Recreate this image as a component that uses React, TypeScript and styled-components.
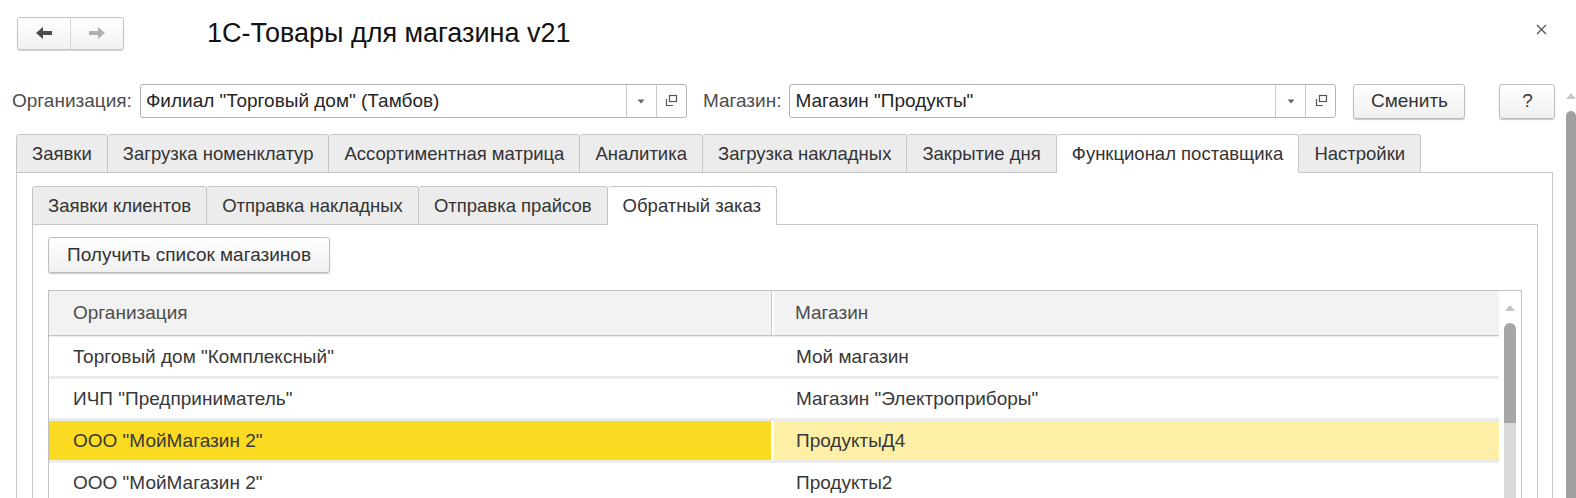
import styled, { createGlobalStyle } from "styled-components"

const Global = createGlobalStyle`
  html, body {
    margin: 0;
    padding: 0;
    background: #fff;
  }
  body {
    font-family: "Liberation Sans", Arial, sans-serif;
    color: #333;
    overflow: hidden;
  }
`

const mainTabs = [
  "Заявки",
  "Загрузка номенклатур",
  "Ассортиментная матрица",
  "Аналитика",
  "Загрузка накладных",
  "Закрытие дня",
  "Функционал поставщика",
  "Настройки",
]

const subTabs = ["Заявки клиентов", "Отправка накладных", "Отправка прайсов", "Обратный заказ"]

const rows = [
  { org: "Торговый дом \"Комплексный\"", shop: "Мой магазин" },
  { org: "ИЧП \"Предприниматель\"", shop: "Магазин \"Электроприборы\"" },
  { org: "ООО \"МойМагазин 2\"", shop: "ПродуктыД4", selected: true },
  { org: "ООО \"МойМагазин 2\"", shop: "Продукты2" },
]

function ArrowIcon({ dir, color }: { dir: "left" | "right", color: string }) {
  return (
    <svg width="18" height="14" viewBox="0 0 18 14" style={{ transform: dir === "right" ? "scaleX(-1)" : undefined }}>
      <path d="M1 7 L8 1 L8 5 L17 5 L17 9 L8 9 L8 13 Z" fill={color} />
    </svg>
  )
}

function CopyIcon() {
  return (
    <svg width="14" height="14" viewBox="0 0 14 14">
      <rect x="5.5" y="1.5" width="7" height="6" fill="none" stroke="#555" strokeWidth="1.2" />
      <path d="M2.5 5 V11.5 H9" fill="none" stroke="#555" strokeWidth="1.2" />
    </svg>
  )
}

function CaretIcon() {
  return (
    <svg width="8" height="5" viewBox="0 0 8 5">
      <path d="M0.5 0.5 H7.5 L4 4.5 Z" fill="#666" />
    </svg>
  )
}

function Field({ value }: { value: string }) {
  return (
    <Input>
      <InputText>{value}</InputText>
      <InputBtn><CaretIcon /></InputBtn>
      <InputBtn><CopyIcon /></InputBtn>
    </Input>
  )
}

export default function App() {
  return (
    <Page>
      <Global />
      <Main>
        <TitleBar>
          <NavGroup>
            <NavBtn><ArrowIcon dir="left" color="#4a4a4a" /></NavBtn>
            <NavBtn $last><ArrowIcon dir="right" color="#b0b0b0" /></NavBtn>
          </NavGroup>
          <Title>1С-Товары для магазина v21</Title>
          <Close>
            <svg width="11" height="11" viewBox="0 0 11 11">
              <path d="M1 1 L10 10 M10 1 L1 10" stroke="#555" strokeWidth="1.3" />
            </svg>
          </Close>
        </TitleBar>

        <FormRow>
          <Label>Организация:</Label>
          <Field value={"Филиал \"Торговый дом\" (Тамбов)"} />
          <Label $gap>Магазин:</Label>
          <Field value={"Магазин \"Продукты\""} />
          <Button $width={112} $ml={17}>Сменить</Button>
          <Button $width={56} $ml={34}>?</Button>
        </FormRow>

        <Tabs>
          {mainTabs.map((t) => (
            <Tab key={t} $active={t === "Функционал поставщика"}>{t}</Tab>
          ))}
        </Tabs>
        <OuterPanel>
          <SubTabs>
            {subTabs.map((t) => (
              <Tab key={t} $active={t === "Обратный заказ"}>{t}</Tab>
            ))}
          </SubTabs>
          <InnerPanel>
            <Button $width={282} $height={36}>Получить список магазинов</Button>
            <Table>
              <Grid>
                <HeadRow>
                  <HeadCell>Организация</HeadCell>
                  <HeadCell $divider>Магазин</HeadCell>
                </HeadRow>
                {rows.map((r, i) => (
                  <Row key={i}>
                    <Cell $bg={r.selected ? "#fbda22" : "#fff"}>{r.org}</Cell>
                    <Cell $bg={r.selected ? "#fdf0a6" : "#fff"} $divider>{r.shop}</Cell>
                  </Row>
                ))}
              </Grid>
              <TableScroll>
                <UpArrow $color="#c4c4c4" />
                <Thumb $width={12} $color="#a6a6a6" $top={12} $len={100} />
              </TableScroll>
            </Table>
          </InnerPanel>
        </OuterPanel>
      </Main>
      <WinScroll>
        <UpArrow $color="#c8c8c8" />
        <Thumb $width={10} $color="#a0a0a0" $top={12} $len={600} />
      </WinScroll>
    </Page>
  )
}

const Page = styled.div`
  display: flex;
  width: 1576px;
  height: 498px;
  overflow: hidden;
`

const Main = styled.div`
  flex: 1;
  display: flex;
  flex-direction: column;
  padding: 0 13px 0 12px;
  min-width: 0;
  overflow: hidden;
  & > * {
    flex-shrink: 0;
  }
`

const TitleBar = styled.div`
  display: flex;
  align-items: center;
  height: 66px;
  padding-left: 5px;
`

const NavGroup = styled.div`
  display: flex;
  height: 31px;
  border: 1px solid #c3c3c3;
  border-radius: 3px;
  background: linear-gradient(#ffffff, #f1f1f1);
  box-shadow: 0 1px 1px rgba(0, 0, 0, 0.18);
`

const NavBtn = styled.div<{ $last?: boolean }>`
  width: 52px;
  display: flex;
  align-items: center;
  justify-content: center;
  border-right: ${(p) => (p.$last ? "none" : "1px solid #d6d6d6")};
`

const Title = styled.div`
  margin-left: 83px;
  font-size: 27px;
  color: #111;
  flex: 1;
`

const Close = styled.div`
  width: 24px;
  display: flex;
  justify-content: center;
  margin-top: -8px;
`

const FormRow = styled.div`
  display: flex;
  align-items: center;
  height: 34px;
  margin-top: 18px;
`

const Label = styled.div<{ $gap?: boolean }>`
  font-size: 19px;
  color: #4d4d4d;
  margin-left: ${(p) => (p.$gap ? "16px" : "0")};
  margin-right: 8px;
  white-space: nowrap;
`

const Input = styled.div`
  width: 545px;
  height: 32px;
  display: flex;
  border: 1px solid #b4b4b4;
  border-radius: 3px;
  background: #fff;
  flex-shrink: 0;
`

const InputText = styled.div`
  flex: 1;
  font-size: 19px;
  color: #262626;
  padding-left: 5px;
  display: flex;
  align-items: center;
  white-space: nowrap;
`

const InputBtn = styled.div`
  width: 29px;
  border-left: 1px solid #c8c8c8;
  display: flex;
  align-items: center;
  justify-content: center;
`

const Button = styled.div<{ $width: number, $height?: number, $ml?: number }>`
  box-sizing: border-box;
  width: ${(p) => p.$width}px;
  height: ${(p) => p.$height ?? 35}px;
  margin-left: ${(p) => p.$ml ?? 0}px;
  border: 1px solid #bdbdbd;
  border-radius: 3px;
  background: linear-gradient(#ffffff, #f0f0f0);
  box-shadow: 0 1px 1px rgba(0, 0, 0, 0.22);
  display: flex;
  align-items: center;
  justify-content: center;
  font-size: 19px;
  color: #333;
  white-space: nowrap;
  flex-shrink: 0;
`

const Tabs = styled.div`
  display: flex;
  margin: 16px 0 0 4px;
  height: 39px;
  position: relative;
  z-index: 1;
`

const Tab = styled.div<{ $active?: boolean }>`
  height: 39px;
  box-sizing: border-box;
  padding: 0 15px;
  display: flex;
  align-items: center;
  font-size: 18.5px;
  color: #333;
  white-space: nowrap;
  background: ${(p) => (p.$active ? "#fff" : "#ececec")};
  border: 1px solid #c6c6c6;
  border-left-width: 0;
  border-bottom-color: ${(p) => (p.$active ? "#fff" : "#c6c6c6")};
  border-radius: 3px 3px 0 0;
  &:first-child {
    border-left-width: 1px;
  }
`

const OuterPanel = styled.div`
  flex: 1;
  margin: -1px 0 0 4px;
  border: 1px solid #c6c6c6;
  border-bottom: none;
  padding: 13px 14px 0 15px;
  display: flex;
  flex-direction: column;
  overflow: hidden;
  & > * {
    flex-shrink: 0;
  }
`

const SubTabs = styled.div`
  display: flex;
  height: 39px;
  position: relative;
  z-index: 1;
`

const InnerPanel = styled.div`
  flex: 1 0 auto;
  margin-top: -1px;
  border: 1px solid #c6c6c6;
  border-bottom: none;
  padding: 12px 15px 0 15px;
  display: flex;
  flex-direction: column;
  & > * {
    flex-shrink: 0;
  }
`

const Table = styled.div`
  margin-top: 17px;
  flex: 1 0 auto;
  display: flex;
  border: 1px solid #c0c0c0;
  border-bottom: none;
`

const Grid = styled.div`
  flex: 1;
  display: flex;
  flex-direction: column;
`

const HeadRow = styled.div`
  display: grid;
  grid-template-columns: 722px 1fr;
  height: 44px;
  background: #f2f2f2;
  border-bottom: 1px solid #c4c4c4;
  box-shadow: 0 1px 0 #e6e6e6;
`

const HeadCell = styled.div<{ $divider?: boolean }>`
  display: flex;
  align-items: center;
  padding-left: ${(p) => (p.$divider ? "23px" : "24px")};
  font-size: 19px;
  color: #4d4d4d;
  border-left: ${(p) => (p.$divider ? "1px solid #c8c8c8" : "none")};
  box-shadow: ${(p) => (p.$divider ? "inset 2px 0 0 #fff" : "none")};
`

const Row = styled.div`
  display: grid;
  grid-template-columns: 722px 1fr;
  height: 42px;
  border-top: 3px solid #ebebeb;
  box-sizing: border-box;
  &:nth-child(2) {
    border-top-width: 1px;
    height: 40px;
  }
`

const Cell = styled.div<{ $bg: string, $divider?: boolean }>`
  display: flex;
  align-items: center;
  padding-left: ${(p) => (p.$divider ? "22px" : "24px")};
  font-size: 19px;
  color: #383838;
  white-space: nowrap;
  background: ${(p) => p.$bg};
  border-left: ${(p) => (p.$divider ? "3px solid #fff" : "none")};
`

const TableScroll = styled.div`
  width: 22px;
  background: #fff;
  display: flex;
  flex-direction: column;
  align-items: center;
  padding-top: 14px;
`

const WinScroll = styled.div`
  width: 10px;
  display: flex;
  flex-direction: column;
  align-items: center;
  padding-top: 93px;
`

const UpArrow = styled.div<{ $color: string }>`
  width: 0;
  height: 0;
  border-left: 5px solid transparent;
  border-right: 5px solid transparent;
  border-bottom: 6px solid ${(p) => p.$color};
`

const Thumb = styled.div<{ $width: number, $color: string, $top: number, $len: number }>`
  width: ${(p) => p.$width}px;
  margin-top: ${(p) => p.$top}px;
  flex: 1;
  border-radius: 6px 6px 0 0;
  background: linear-gradient(${(p) => p.$color} 0, ${(p) => p.$color} ${(p) => p.$len}px, #dadada ${(p) => p.$len}px);
`
